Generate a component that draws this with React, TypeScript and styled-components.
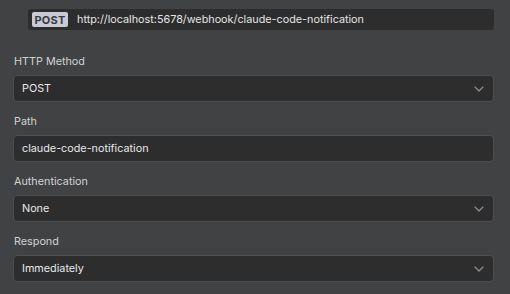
import React from 'react';
import styled, { createGlobalStyle } from 'styled-components';

const GlobalStyle = createGlobalStyle`
  html, body {
    margin: 0;
    padding: 0;
    background: #414244;
  }
  body {
    font-family: Inter, "Noto Sans", sans-serif;
    -webkit-font-smoothing: antialiased;
  }
`;

const Panel = styled.div`
  width: 510px;
  height: 294px;
  box-sizing: border-box;
  padding: 9px 16px 0 13px;
  background: #414244;
  overflow: hidden;
`;

const UrlBar = styled.div`
  display: flex;
  align-items: center;
  gap: 9px;
  height: 21px;
  margin: 0 0 24px 15px;
  padding: 0 4px;
  background: #2d2d2e;
  border-radius: 3px;
`;

const MethodBadge = styled.span`
  display: inline-flex;
  align-items: center;
  justify-content: center;
  height: 15px;
  width: 36px;
  background: #c8cbd5;
  color: #3a3b3e;
  border-radius: 2px;
  font-size: 11px;
  font-weight: 700;
  letter-spacing: 0.2px;
`;

const UrlText = styled.span`
  color: #e4e4e6;
  font-size: 10.8px;
`;

const Field = styled.div`
  display: flex;
  flex-direction: column;
  gap: 5px;
  margin-bottom: 12px;
`;

const Label = styled.label`
  height: 16px;
  line-height: 16px;
  font-size: 10.8px;
  color: #d2d2d4;
  padding-left: 1px;
`;

const Control = styled.div`
  display: flex;
  align-items: center;
  justify-content: space-between;
  height: 27px;
  box-sizing: border-box;
  padding: 0 9px 0 8px;
  background: #2d2d2e;
  border: 1px solid #4e4f52;
  border-radius: 4px;
  color: #e8e8ea;
  font-size: 10.8px;
`;

const Chevron = () => (
  <svg width="10" height="6" viewBox="0 0 10 6" fill="none">
    <path d="M1 1l4 4 4-4" stroke="#8e8f93" strokeWidth="1.2" strokeLinecap="round" strokeLinejoin="round" />
  </svg>
);

interface FieldDef {
  label: string;
  value: string;
  select: boolean;
}

const fields: FieldDef[] = [
  { label: 'HTTP Method', value: 'POST', select: true },
  { label: 'Path', value: 'claude-code-notification', select: false },
  { label: 'Authentication', value: 'None', select: true },
  { label: 'Respond', value: 'Immediately', select: true },
];

const App: React.FC = () => {
  return (
    <Panel>
      <GlobalStyle />
      <UrlBar>
        <MethodBadge>POST</MethodBadge>
        <UrlText>http://localhost:5678/webhook/claude-code-notification</UrlText>
      </UrlBar>
      {fields.map((f) => (
        <Field key={f.label}>
          <Label>{f.label}</Label>
          <Control>
            <span>{f.value}</span>
            {f.select && <Chevron />}
          </Control>
        </Field>
      ))}
    </Panel>
  );
};

export default App;
